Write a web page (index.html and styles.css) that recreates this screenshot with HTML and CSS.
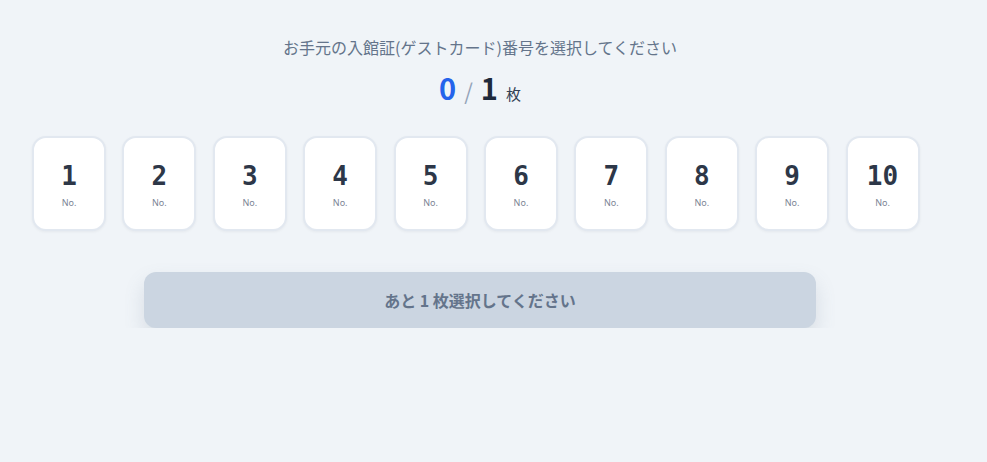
FILE: index.html
```html
<!DOCTYPE html>
<html lang="ja">
<head>
<meta charset="utf-8">
<title>ゲストカード選択</title>
<link rel="stylesheet" href="styles.css">
</head>
<body>
<main class="wrap">
  <p class="title">お手元の入館証(ゲストカード)番号を選択してください</p>
  <div class="counter">
    <span class="cur">0</span>
    <span class="sep">/</span>
    <span class="total">1</span>
    <span class="unit">枚</span>
  </div>
  <div class="grid">
    <button class="card"><span class="num">1</span><span class="no">No.</span></button>
    <button class="card"><span class="num">2</span><span class="no">No.</span></button>
    <button class="card"><span class="num">3</span><span class="no">No.</span></button>
    <button class="card"><span class="num">4</span><span class="no">No.</span></button>
    <button class="card"><span class="num">5</span><span class="no">No.</span></button>
    <button class="card"><span class="num">6</span><span class="no">No.</span></button>
    <button class="card"><span class="num">7</span><span class="no">No.</span></button>
    <button class="card"><span class="num">8</span><span class="no">No.</span></button>
    <button class="card"><span class="num">9</span><span class="no">No.</span></button>
    <button class="card"><span class="num">10</span><span class="no">No.</span></button>
  </div>
  <button class="submit" disabled>あと 1 枚選択してください</button>
</main>
</body>
</html>
```

FILE: styles.css
```css
html, body {
  margin: 0;
  padding: 0;
  background: #f0f4f8;
}
body {
  font-family: "Noto Sans CJK JP", "Noto Sans", sans-serif;
}
.wrap {
  width: 960px;
  padding-top: 35px;
}
.title {
  margin: 0;
  text-align: center;
  font-size: 16px;
  line-height: 24px;
  color: #64748b;
}
.counter {
  margin-top: 8px;
  height: 40px;
  display: flex;
  justify-content: center;
  align-items: baseline;
  gap: 8px;
  line-height: 40px;
}
.cur, .total {
  font-size: 29px;
  font-weight: 700;
}
.cur { color: #2563eb; }
.total { color: #1e293b; }
.sep {
  font-size: 22px;
  color: #94a3b8;
}
.unit {
  font-size: 15px;
  color: #334155;
}
.grid {
  margin-top: 29px;
  padding-left: 32px;
  display: grid;
  grid-template-columns: repeat(10, 74px);
  column-gap: 16.4px;
}
.card {
  box-sizing: border-box;
  height: 95px;
  padding: 0;
  background: #ffffff;
  border: 2px solid #e2e8f0;
  border-radius: 14px;
  box-shadow: 0 1px 3px rgba(15, 23, 42, 0.05);
  display: flex;
  flex-direction: column;
  align-items: center;
  justify-content: center;
  font-family: inherit;
}
.num {
  margin-top: 2px;
  font-family: "DejaVu Sans Mono", monospace;
  font-weight: 700;
  font-size: 26px;
  line-height: 30px;
  color: #2d3748;
}
.no {
  margin-top: 6px;
  font-family: "Noto Sans", sans-serif;
  font-size: 9px;
  line-height: 12px;
  color: #7b8494;
}
.submit {
  display: block;
  box-sizing: border-box;
  width: 672px;
  height: 56px;
  margin: 41px auto 0;
  border: none;
  border-radius: 12px;
  background: #cbd5e1;
  color: #64748b;
  font-family: inherit;
  font-size: 16px;
  font-weight: 700;
  box-shadow: 0 10px 20px rgba(100, 116, 139, 0.18);
}
```
